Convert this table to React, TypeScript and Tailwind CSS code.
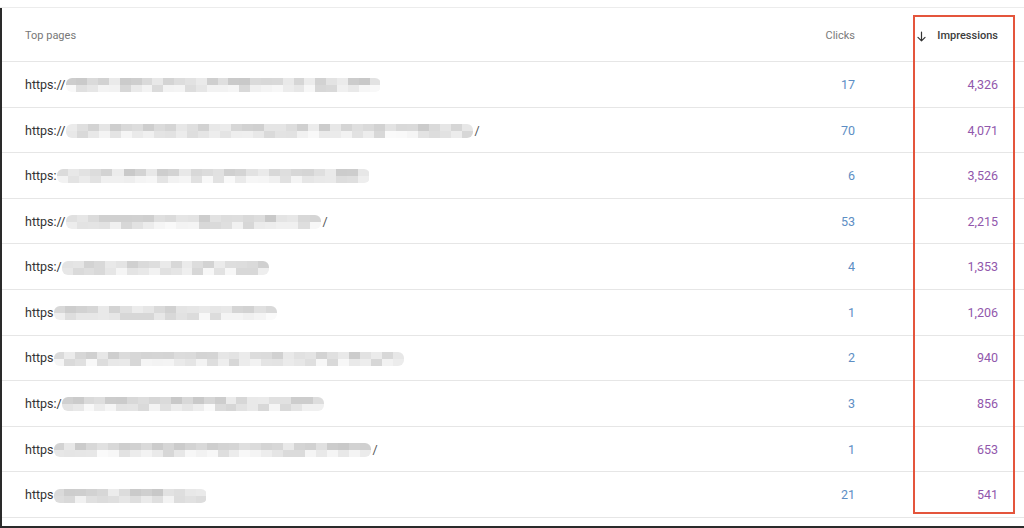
const rows = [
  { prefix: "https://", blurTo: 378, tail: "", clicks: 17, impressions: "4,326" },
  { prefix: "https://", blurTo: 470, tail: "/", clicks: 70, impressions: "4,071" },
  { prefix: "https:", blurTo: 368, tail: "", clicks: 6, impressions: "3,526" },
  { prefix: "https://", blurTo: 318, tail: "/", clicks: 53, impressions: "2,215" },
  { prefix: "https:/", blurTo: 270, tail: "", clicks: 4, impressions: "1,353" },
  { prefix: "https", blurTo: 278, tail: "", clicks: 1, impressions: "1,206" },
  { prefix: "https", blurTo: 405, tail: "", clicks: 2, impressions: "940" },
  { prefix: "https:/", blurTo: 325, tail: "", clicks: 3, impressions: "856" },
  { prefix: "https", blurTo: 372, tail: "/", clicks: 1, impressions: "653" },
  { prefix: "https", blurTo: 208, tail: "", clicks: 21, impressions: "541" },
];

// cheap seeded shades for the pixelated redaction
function shade(seed: number, light: boolean): string {
  const x = Math.sin(seed * 12.9898) * 43758.5453;
  const f = x - Math.floor(x);
  const v = Math.round((light ? 214 : 200) + f * 36);
  return `rgb(${v},${v},${v})`;
}

function Redacted({ width, seed }: { width: number; seed: number }) {
  const cells = Math.max(1, Math.round(width / 11));
  return (
    <span className="inline-flex flex-col overflow-hidden rounded-[6px] blur-[0.6px]" style={{ width }}>
      {[0, 1].map((r) => (
        <span key={r} className="flex h-[7px]">
          {Array.from({ length: cells }).map((_, i) => (
            <span
              key={i}
              className="h-full flex-1"
              style={{ background: shade(seed * 97 + r * 31 + i, r === 1) }}
            />
          ))}
        </span>
      ))}
    </span>
  );
}

export default function App() {
  return (
    <div
      className="relative h-[528px] w-[1024px] overflow-hidden bg-white"
      style={{ fontFamily: "Roboto, 'Liberation Sans', sans-serif" }}
    >
      <div className="h-[8px] border-b border-[#ececec]" />
      <div className="h-[518px] border-l-2 border-[#2a2a2a]">
        <div className="flex h-[54px] items-center border-b border-[#e6e6e6] pl-[23px] pr-[26px] pt-[4px] text-[11px]">
          <div className="flex-1 text-[#777]">Top pages</div>
          <div className="w-[120px] text-right text-[#7a7a7a]">Clicks</div>
          <div className="flex w-[143px] items-center justify-end gap-[9px] font-medium text-[#3c3c3c]">
            <svg viewBox="0 0 24 24" className="h-[13px] w-[13px]" fill="none" stroke="#333" strokeWidth="2.2" strokeLinecap="round" strokeLinejoin="round">
              <path d="M12 4v16M5.5 13.5 12 20l6.5-6.5" />
            </svg>
            <span>Impressions</span>
          </div>
        </div>
        {rows.map((r, i) => (
          <div
            key={i}
            className="flex h-[45.6px] items-center border-b border-[#e6e6e6] pl-[23px] pr-[26px] pt-[2px] text-[12.5px]"
          >
            <div className="flex flex-1 items-center text-[#333]">
              <span>{r.prefix}</span>
              <Redacted width={r.blurTo - (r.prefix.length >= 7 ? 63 : 55)} seed={i + 1} />
              {r.tail ? <span className="ml-[2px] text-[#555]">{r.tail}</span> : null}
            </div>
            <div className="w-[120px] text-right text-[#5d8ec4]">{r.clicks}</div>
            <div className="w-[143px] text-right text-[#9157ac]">{r.impressions}</div>
          </div>
        ))}
      </div>
      <div className="h-[2px] bg-[#2a2a2a]" />
      <div className="pointer-events-none absolute left-[913px] top-[15px] h-[499px] w-[102px] border-2 border-[#e4553c]" />
    </div>
  );
}
